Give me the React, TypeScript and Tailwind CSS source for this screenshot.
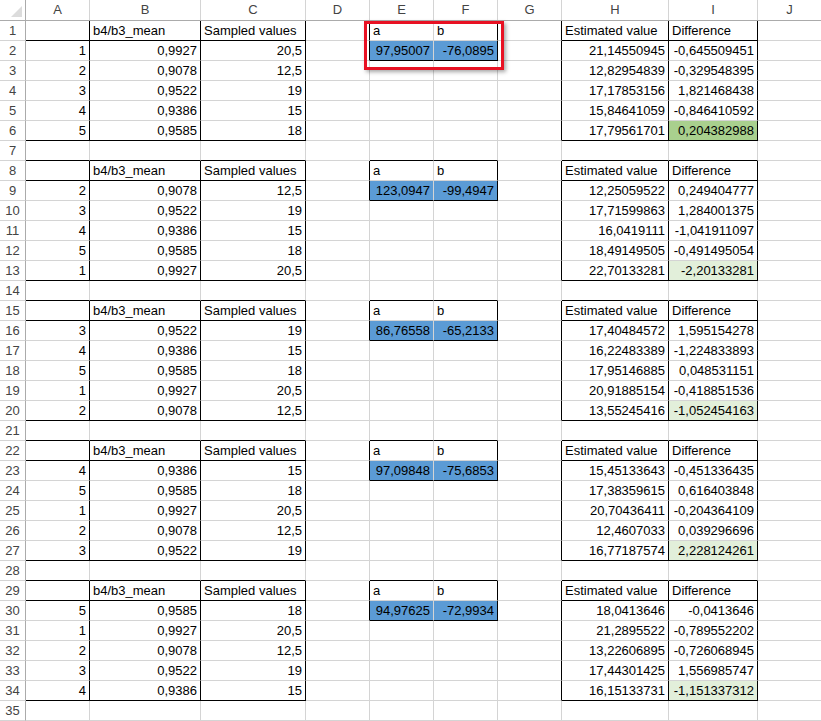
import React from "react";

const cols = ["A", "B", "C", "D", "E", "F", "G", "H", "I", "J"];
const widths = [64, 111, 105, 64, 64, 64, 64, 107, 89, 64];

const B = ["0,9927", "0,9078", "0,9522", "0,9386", "0,9585"];
const C = ["20,5", "12,5", "19", "15", "18"];

const blocks = [
  {
    order: [1, 2, 3, 4, 5],
    a: "97,95007",
    b: "-76,0895",
    h: [["21,14550945", "-0,645509451"], ["12,82954839", "-0,329548395"], ["17,17853156", "1,821468438"], ["15,84641059", "-0,846410592"], ["17,79561701", "0,204382988"]],
  },
  {
    order: [2, 3, 4, 5, 1],
    a: "123,0947",
    b: "-99,4947",
    h: [["12,25059522", "0,249404777"], ["17,71599863", "1,284001375"], ["16,0419111", "-1,041911097"], ["18,49149505", "-0,491495054"], ["22,70133281", "-2,20133281"]],
  },
  {
    order: [3, 4, 5, 1, 2],
    a: "86,76558",
    b: "-65,2133",
    h: [["17,40484572", "1,595154278"], ["16,22483389", "-1,224833893"], ["17,95146885", "0,048531151"], ["20,91885154", "-0,418851536"], ["13,55245416", "-1,052454163"]],
  },
  {
    order: [4, 5, 1, 2, 3],
    a: "97,09848",
    b: "-75,6853",
    h: [["15,45133643", "-0,451336435"], ["17,38359615", "0,616403848"], ["20,70436411", "-0,204364109"], ["12,4607033", "0,039296696"], ["16,77187574", "2,228124261"]],
  },
  {
    order: [5, 1, 2, 3, 4],
    a: "94,97625",
    b: "-72,9934",
    h: [["18,0413646", "-0,0413646"], ["21,2895522", "-0,789552202"], ["13,22606895", "-0,726068945"], ["17,44301425", "1,556985747"], ["16,15133731", "-1,151337312"]],
  },
];

type Cell = { text?: string; right?: boolean; fill?: string };

// sheet[row][col], row 1-based, col 0-based
function buildCell(r: number, c: number): Cell {
  const bi = Math.floor((r - 1) / 7);
  const k = (r - 1) % 7;
  const blk = blocks[bi];
  if (!blk || k === 6) return {};
  if (k === 0) {
    const heads: Record<number, string> = { 1: "b4/b3_mean", 2: "Sampled values", 4: "a", 5: "b", 7: "Estimated value", 8: "Difference" };
    return { text: heads[c] };
  }
  const n = blk.order[k - 1];
  if (c === 0) return { text: String(n), right: true };
  if (c === 1) return { text: B[n - 1], right: true };
  if (c === 2) return { text: C[n - 1], right: true };
  if (k === 1 && c === 4) return { text: blk.a, right: true, fill: "blue" };
  if (k === 1 && c === 5) return { text: blk.b, right: true, fill: "blue" };
  if (c === 7) return { text: blk.h[k - 1][0], right: true };
  if (c === 8)
    return { text: blk.h[k - 1][1], right: true, fill: k === 5 ? (bi === 0 ? "green" : "lightgreen") : undefined };
  return {};
}

// black right border of cell (r,c)?
function blackRight(r: number, c: number) {
  const k = (r - 1) % 7;
  if (r > 34 || k === 6) return false;
  if (c <= 2) return true;
  if (c === 3 || c === 5) return k <= 1;
  if (c === 6 || c === 7 || c === 8) return true;
  return false;
}
function blackBottom(r: number, c: number) {
  const k = (r - 1) % 7;
  if (r > 34) return false;
  const inABC = c <= 2;
  const inEF = c === 4 || c === 5;
  const inHI = c === 7 || c === 8;
  if (k === 6) return inABC || inEF || inHI; // top edge of next block
  if (k === 0) return inABC || inHI;
  if (k === 1) return inEF;
  if (k === 5) return inABC || inHI;
  return false;
}

export default function App() {
  const rows = Array.from({ length: 35 }, (_, i) => i + 1);
  return (
    <div className="relative w-[821px] h-[721px] bg-white overflow-hidden text-[13px] text-black" style={{ fontFamily: '"Liberation Sans", Arial, sans-serif' }}>
      <div className="flex h-[21px] border-b border-[#ababab] text-[#444] bg-white">
        <div className="w-[26px] shrink-0 border-r border-[#ababab] relative">
          <div className="absolute right-[3px] bottom-[3px] w-0 h-0 border-l-[11px] border-l-transparent border-b-[11px] border-b-[#dcdcdc]" />
        </div>
        {cols.map((c, i) => (
          <div key={c} style={{ width: widths[i] }} className="shrink-0 border-r border-[#d4d4d4] flex items-center justify-center">
            {c}
          </div>
        ))}
      </div>
      {rows.map((r) => (
        <div key={r} className="flex h-[20px]">
          <div className="w-[26px] shrink-0 border-r border-[#ababab] border-b border-b-[#d4d4d4] text-[#444] flex items-center justify-center">
            {r}
          </div>
          {cols.map((_, c) => {
            const cell = buildCell(r, c);
            const fill =
              cell.fill === "blue"
                ? "bg-[#5b9bd5]"
                : cell.fill === "green"
                ? "bg-[#a9d08e]"
                : cell.fill === "lightgreen"
                ? "bg-[#e2efda]"
                : "bg-white";
            return (
              <div
                key={c}
                style={{ width: widths[c] }}
                className={[
                  "shrink-0 border-r border-b flex items-center whitespace-nowrap overflow-visible px-[3px]",
                  blackRight(r, c) ? "border-r-black" : "border-r-[#d4d4d4]",
                  blackBottom(r, c) ? "border-b-black" : "border-b-[#d4d4d4]",
                  cell.right ? "justify-end" : "justify-start",
                  fill,
                ].join(" ")}
              >
                {cell.text}
              </div>
            );
          })}
        </div>
      ))}
      <div className="absolute left-[364px] top-[21px] w-[140px] h-[49px] border-[3px] border-[#e81123] shadow-[2px_2px_4px_rgba(0,0,0,0.35)]" />
    </div>
  );
}
